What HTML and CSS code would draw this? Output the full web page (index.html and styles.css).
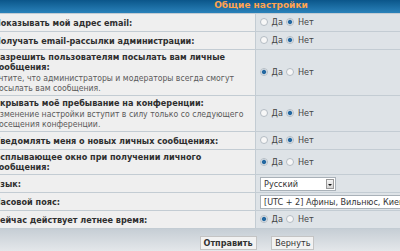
FILE: index.html
```html
<!DOCTYPE html>
<html lang="ru">
<head>
    <meta charset="utf-8">
    <title>Общие настройки</title>
    <link rel="stylesheet" href="styles.css">
</head>
<body>
    <div class="page">
        <table class="forumline">
            <colgroup>
                <col class="col-label">
                <col class="col-field">
            </colgroup>
            <tr>
                <th colspan="2" class="thHead">Общие настройки</th>
            </tr>
            <tr>
                <td class="row1"><span class="gen">Показывать мой адрес email:</span></td>
                <td class="row2">
                    <label class="opt"><input class="radio" type="radio" name="viewemail"> Да</label>
                    <label class="opt"><input class="radio" type="radio" name="viewemail" checked> Нет</label>
                </td>
            </tr>
            <tr>
                <td class="row1"><span class="gen">Получать email-рассылки администрации:</span></td>
                <td class="row2">
                    <label class="opt"><input class="radio" type="radio" name="hideonline_mail"> Да</label>
                    <label class="opt"><input class="radio" type="radio" name="hideonline_mail" checked> Нет</label>
                </td>
            </tr>
            <tr>
                <td class="row1">
                    <span class="gen">Разрешить пользователям посылать вам личные сообщения:</span>
                    <span class="gensmall">Учтите, что администраторы и модераторы всегда смогут посылать вам сообщения.</span>
                </td>
                <td class="row2">
                    <label class="opt"><input class="radio" type="radio" name="allowpm" checked> Да</label>
                    <label class="opt"><input class="radio" type="radio" name="allowpm"> Нет</label>
                </td>
            </tr>
            <tr>
                <td class="row1">
                    <span class="gen">Скрывать моё пребывание на конференции:</span>
                    <span class="gensmall">Изменение настройки вступит в силу только со следующего посещения конференции.</span>
                </td>
                <td class="row2">
                    <label class="opt"><input class="radio" type="radio" name="hideonline"> Да</label>
                    <label class="opt"><input class="radio" type="radio" name="hideonline" checked> Нет</label>
                </td>
            </tr>
            <tr>
                <td class="row1"><span class="gen">Уведомлять меня о новых личных сообщениях:</span></td>
                <td class="row2">
                    <label class="opt"><input class="radio" type="radio" name="notifypm"> Да</label>
                    <label class="opt"><input class="radio" type="radio" name="notifypm" checked> Нет</label>
                </td>
            </tr>
            <tr>
                <td class="row1"><span class="gen">Всплывающее окно при получении личного сообщения:</span></td>
                <td class="row2">
                    <label class="opt"><input class="radio" type="radio" name="popup_pm" checked> Да</label>
                    <label class="opt"><input class="radio" type="radio" name="popup_pm"> Нет</label>
                </td>
            </tr>
            <tr>
                <td class="row1"><span class="gen">Язык:</span></td>
                <td class="row2">
                    <span class="select select-lang">
                        <select name="language"><option>Русский</option></select>
                        <span class="arrow"></span>
                    </span>
                </td>
            </tr>
            <tr>
                <td class="row1"><span class="gen">Часовой пояс:</span></td>
                <td class="row2">
                    <span class="select select-tz">
                        <select name="timezone"><option>[UTC + 2] Афины, Вильнюс, Киев, Рига, Таллин, Хельсинки</option></select>
                    </span>
                </td>
            </tr>
            <tr>
                <td class="row1"><span class="gen">Сейчас действует летнее время:</span></td>
                <td class="row2">
                    <label class="opt"><input class="radio" type="radio" name="dst" checked> Да</label>
                    <label class="opt"><input class="radio" type="radio" name="dst"> Нет</label>
                </td>
            </tr>
            <tr>
                <td colspan="2" class="catBottom">
                    <button class="mainoption" type="submit">Отправить</button>
                    <button class="liteoption" type="reset">Вернуть</button>
                </td>
            </tr>
        </table>
    </div>
</body>
</html>
```

FILE: styles.css
```css
html, body {
    margin: 0;
    overflow: hidden;
}
body {
    background: #e5e5e5;
    font-family: "DejaVu Sans Condensed", "DejaVu Sans", Verdana, sans-serif;
    color: #333;
}
.page {
    margin-left: -10px;
    width: 534px;
}
.forumline {
    width: 100%;
    table-layout: fixed;
    border-collapse: separate;
    border-spacing: 1px;
    margin-top: -1px;
    background: #c3ccd3;
}
.col-label {
    width: 264px;
}
.thHead {
    height: 13px;
    padding: 0 0 0 8px;
    font-family: "DejaVu Sans", Verdana, sans-serif;
    font-size: 9px;
    line-height: 10px;
    vertical-align: top;
    color: #ffa34f;
    background: linear-gradient(#0b568a, #2a82ba);
}
.row1 {
    background: #efefef;
    padding: 2px 3px;
    vertical-align: middle;
}
.row2 {
    height: 17px;
    padding: 0 4px;
    background: #dee3e7;
    vertical-align: middle;
    font-size: 9px;
    line-height: 11px;
}
.gen {
    display: block;
    font-size: 9px;
    font-weight: bold;
    line-height: 10px;
    color: #2e2e2e;
}
.gensmall {
    display: block;
    margin-top: 1px;
    font-size: 8.6px;
    line-height: 10px;
    color: #5a5a5a;
}
.opt {
    margin-right: 1px;
    color: #444;
}
.radio {
    appearance: none;
    display: inline-block;
    width: 8px;
    height: 8px;
    margin: 0 1px 0 0;
    border: 1px solid #b4bcc3;
    border-radius: 50%;
    background: #f7f7f7;
    vertical-align: -1px;
}
.radio:checked {
    background: radial-gradient(circle, #2468a0 0 1.6px, #b9cadb 2.4px, #f2f2f2 3px);
}
.select {
    display: inline-flex;
    align-items: stretch;
    height: 14px;
    border: 1px solid #a9b1b8;
    background: #fff;
    vertical-align: middle;
    box-sizing: border-box;
}
.select select {
    appearance: none;
    border: none;
    background: transparent;
    padding: 0 3px;
    font-family: "DejaVu Sans Condensed", "DejaVu Sans", Verdana, sans-serif;
    font-size: 9px;
    color: #333;
    outline: none;
}
.select-lang select {
    width: 64px;
}
.select-tz {
    width: 300px;
}
.select-tz select {
    width: 100%;
}
.arrow {
    width: 6px;
    margin: 1px;
    border: 1px solid #999;
    background: linear-gradient(#f4f4f4, #d6d6d6);
    position: relative;
}
.arrow::after {
    content: "";
    position: absolute;
    left: 1px;
    top: 4px;
    border-left: 2px solid transparent;
    border-right: 2px solid transparent;
    border-top: 2px solid #111;
}
.catBottom {
    height: 20px;
    padding: 2px 0 0;
    text-align: center;
    vertical-align: top;
    background: linear-gradient(#c6ced5, #e4e7ea);
}
.mainoption, .liteoption {
    height: 14px;
    padding: 0 3px;
    margin: 0 5px;
    border: 1px solid #c4c4c4;
    background: #f2f2f2;
    font-family: "DejaVu Sans Condensed", "DejaVu Sans", Verdana, sans-serif;
    font-size: 9px;
    line-height: 12px;
    color: #333;
}
.mainoption {
    font-weight: bold;
}
```
